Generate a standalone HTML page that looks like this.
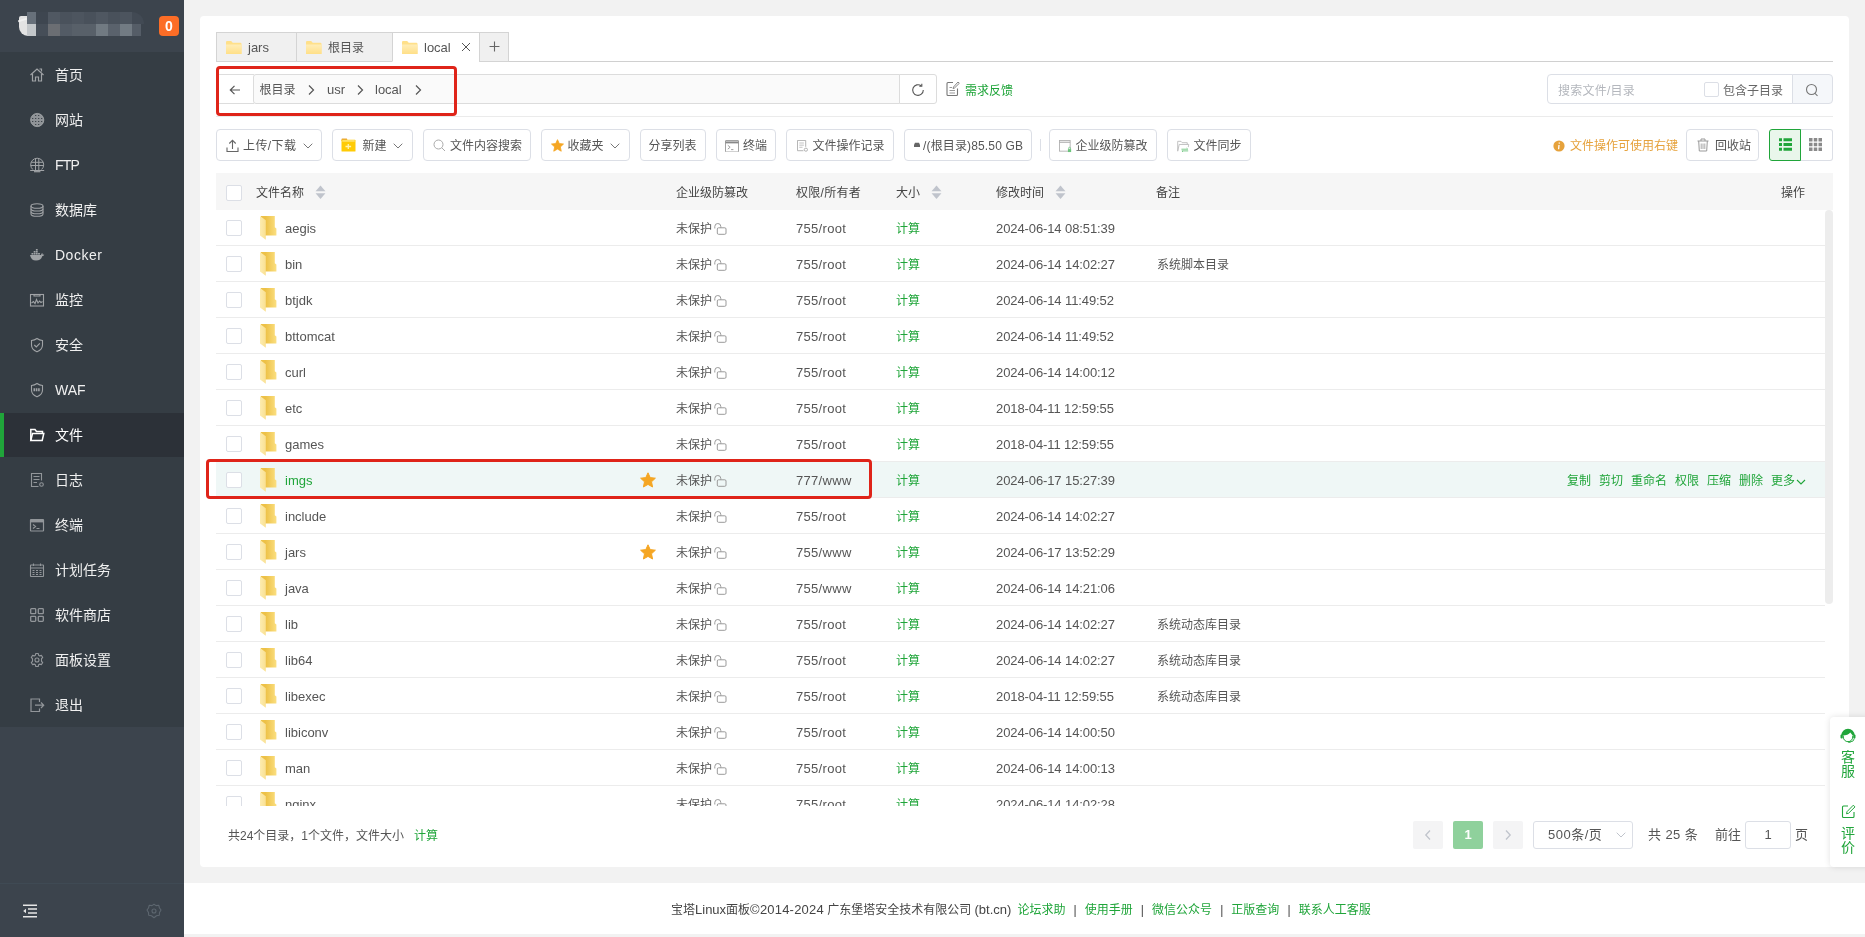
<!DOCTYPE html>
<html lang="zh-CN"><head><meta charset="utf-8"><title>宝塔Linux面板</title>
<style>
*{box-sizing:border-box;margin:0;padding:0}
html,body{width:1865px;height:937px;overflow:hidden;background:#f2f2f2}
body{font-family:"Liberation Sans","Noto Sans CJK SC",sans-serif;font-size:12px;color:#555;position:relative}
a{color:#20a53a;text-decoration:none}
svg{display:block}
/* sidebar */
#side{position:absolute;left:0;top:0;width:184px;height:937px;background:#3c444d}
#side .hd{position:absolute;left:0;top:0;width:184px;height:52px;background:#3c444d}
#side .badge{position:absolute;left:159px;top:16px;width:20px;height:20px;border-radius:4px;background:#fc6d26;color:#fff;font-weight:bold;font-size:14px;line-height:20px;text-align:center}
#side .mz{position:absolute;height:12px}
#menu{position:absolute;left:0;top:52px;width:184px;height:675px;background:#353d44}
#menu .it{position:absolute;left:0;width:184px;height:45px;color:#f0f0f0;font-size:14px;line-height:47px;padding-left:55px}
#menu .it svg{position:absolute;left:29px;top:15px;width:16px;height:16px}
#menu .it.on{background:#2c3138;box-shadow:inset 4px 0 0 #20a53a;color:#fff;height:44px;line-height:45px}
#menu .it.on svg{top:14px}
#side .ft{position:absolute;left:0;top:883px;width:184px;height:54px;border-top:1px solid #3f4a54}
/* main */
#main{position:absolute;left:184px;top:0;width:1681px;height:937px}
#card{position:absolute;left:16px;top:16px;width:1649px;height:851px;background:#fff;border-radius:4px}
#foot{position:absolute;left:0;top:883px;width:1681px;height:51px;background:#fff;text-align:left;padding-left:487px;line-height:53px;color:#444;font-size:12px;white-space:nowrap}
#foot .en{font-size:13px}
#tabline{position:absolute;left:32px;top:61px;width:1617px;height:1px;background:#d0d0d0}
.tab{position:absolute;top:32px;height:30px;background:#f0f0f0;border:1px solid #d4d4d4;color:#555;font-size:12px;line-height:31px}
.tab .en{font-size:13px;line-height:29px}
.tab.act{background:#fff;border-bottom-color:#fff}
.tab span{position:absolute;top:0}
.tab .tf{position:absolute;left:9px;top:7.500px;width:15.500px;height:13.500px}
.tab .tx{position:absolute;left:68px;top:9px;width:10px;height:10px}
.tab .tp{position:absolute;left:9px;top:8px;width:11px;height:11px}
#pback{position:absolute;left:32px;top:74px;width:38px;height:30px;background:#fff;border:1px solid #ddd;border-right:0}
#pback svg{position:absolute;left:12px;top:9px;width:12px;height:12px}
#pbar{position:absolute;left:69px;top:74px;width:647px;height:30px;background:#fafafa;border:1px solid #dcdcdc;border-radius:3px 0 0 3px;font-size:12px;line-height:31px;color:#555}
#pbar .en{font-size:13px;line-height:29px}
#pbar .seg{position:absolute;top:0}
#pbar .ch{position:absolute;top:9px;width:8px;height:12px}
#prefresh{position:absolute;left:715px;top:74px;width:38px;height:30px;background:#fff;border:1px solid #dcdcdc;border-radius:0 3px 3px 0}
#prefresh svg{position:absolute;left:11px;top:8px;width:14px;height:14px}
#fb{position:absolute;left:762px;top:74px;height:30px;line-height:34px;font-size:12px}
#fb svg{position:absolute;left:0;top:7px;width:14px;height:16px}
#fb a{position:absolute;left:19px;top:0;white-space:nowrap}
#redbox1{position:absolute;left:32px;top:66px;width:241px;height:50px;border:3px solid #df2419;border-radius:4px}
#navline{position:absolute;left:32px;top:116px;width:1617px;height:1px;background:#ebebeb}
#sbox{position:absolute;left:1363px;top:74px;width:246px;height:30px;background:#fff;border:1px solid #dcdfe6;border-radius:4px 0 0 4px;line-height:32px}
#sbox .ph{position:absolute;left:10px;top:0;color:#b4b7bd;letter-spacing:.25px}
#sbox .cb2{position:absolute;left:156px;top:7px;width:15px;height:15px;border:1px solid #dcdfe6;border-radius:2px;background:#fff}
#sbox .inc{position:absolute;left:175px;top:0;color:#666}
#sbtn{position:absolute;left:1608px;top:74px;width:41px;height:30px;background:#f5f7fa;border:1px solid #dcdfe6;border-radius:0 4px 4px 0}
#sbtn svg{position:absolute;left:12px;top:8px;width:14px;height:14px}
.btn{position:absolute;top:129px;height:32px;background:#fff;border:1px solid #dcdfe6;border-radius:4px;line-height:33px;color:#555;font-size:12px;white-space:nowrap}
.btn span{position:absolute;top:0}
.btn svg{position:absolute}
.btn .dn{top:13px;width:10px;height:6px}
#tsep{position:absolute;left:856px;top:139px;width:1px;height:12px;background:#dcdfe6}
#tip{position:absolute;left:1369px;top:129px;height:31px;line-height:35px;color:#e6a23c;white-space:nowrap}
#tip svg{position:absolute;left:0;top:11px;width:12px;height:12px}
#tip span{position:absolute;left:17px;top:0}
#vlist{position:absolute;left:1585px;top:129px;width:32px;height:32px;background:#e9f6eb;border:1px solid #20a53a;border-radius:3px 0 0 3px;z-index:2}
#vgrid{position:absolute;left:1616px;top:129px;width:33px;height:32px;background:#fff;border:1px solid #dcdfe6;border-left:0;border-radius:0 3px 3px 0}
#vlist svg,#vgrid svg{position:absolute;left:9px;top:8px;width:13px;height:13px}
#thead{position:absolute;left:32px;top:173px;width:1617px;height:37px;background:#f6f6f6;line-height:37px;color:#444}
#thead span{position:absolute;top:2px;white-space:nowrap}
#thead .so{position:absolute;top:11.500px;width:11px;height:14.500px;margin-left:-0.500px}
.cb{position:absolute;width:16px;height:16px;border:1px solid #dcdfe6;border-radius:2px;background:#fff}
#scroll{position:absolute;left:1641px;top:210px;width:8px;height:394px;background:#ededed;border-radius:4px}
/* rows */
#tbody{position:absolute;left:32px;top:210px;width:1609px;height:596px;overflow:hidden}
.row{position:absolute;left:0;width:1609px;height:36px;border-bottom:1px solid #ececec;line-height:35px;color:#555}
.row.hov{background:#eff7f6}
.row .cb{left:10px;top:10px}
.row .fd{position:absolute;left:44px;top:6px;width:17px;height:24px}
.row span{position:absolute;top:2px;white-space:nowrap}
.row .nm{left:69px;font-size:13px;top:1px}
.row.hov .nm{color:#20a53a}
.row .st{position:absolute;left:424px;top:10px;width:16px;height:16px}
.row .pr{left:460px}
.row .lk{position:absolute;left:497.5px;top:12.5px;width:13px;height:12px}
.row .pm{left:580px;font-size:13px;top:1px;letter-spacing:.3px}
.row .sz{left:680px;color:#20a53a}
.row .dt{left:780px;font-size:13px;top:1px;letter-spacing:-.1px}
.row .ps{left:941px}
.row .ops{position:absolute;right:19px;top:2px;display:flex;gap:8px}
.row .ops a{display:flex;align-items:center}
.row .ops .mv{width:10px;height:10px;margin-left:1px}
#redbox2{position:absolute;left:22px;top:459px;width:666px;height:40px;border:3px solid #df2419;border-radius:4px}
#sum{position:absolute;left:44px;top:821px;line-height:30px;font-size:12px;color:#555;white-space:nowrap}
#sum a{margin-left:10px}
.pg{position:absolute;top:821px;width:30px;height:28px;background:#f4f4f5;border-radius:2px;text-align:center;line-height:28px;font-size:13px}
.pg svg{position:absolute;left:11px;top:8px;width:8px;height:12px}
.pg.cur{background:#8fd19c;color:#fff;font-weight:bold}
#psel{position:absolute;left:1349px;top:821px;width:100px;height:28px;border:1px solid #dcdfe6;border-radius:3px;background:#fff;font-size:13px;line-height:26px;color:#555}
#psel span{position:absolute;left:14px;top:0}
#psel svg{position:absolute;left:82px;top:10px;width:10px;height:6px}
#ptot,#pgo,#pye{position:absolute;top:821px;line-height:28px;font-size:13px;color:#555;white-space:nowrap}
#ptot{left:1464px}
#pgo{left:1531px}
#pye{left:1611px}
#pinp{position:absolute;left:1561px;top:821px;width:46px;height:28px;border:1px solid #dcdfe6;border-radius:3px;background:#fff;text-align:center;line-height:26px;font-size:13px;color:#555}
#float{position:absolute;left:1646px;top:717px;width:40px;height:150px;background:#fff;border-radius:4px 0 0 4px;box-shadow:0 0 6px rgba(0,0,0,.12);color:#20a53a;font-size:14px}
#float svg{position:absolute}
#float span{position:absolute;left:11px;line-height:16px}
#foot b{font-weight:normal;margin:0 8.100px;color:#444}

#side,#main{will-change:transform}

</style></head><body>
<svg width="0" height="0" style="position:absolute">
<defs>
<linearGradient id="fg" x1="0" y1="0" x2="1" y2="0"><stop offset="0.3" stop-color="#edc147"/><stop offset="1" stop-color="#fbdf80"/></linearGradient><linearGradient id="fg2" x1="0" y1="0" x2="1" y2="0"><stop offset="0" stop-color="#fdecb0"/><stop offset="1" stop-color="#f9e092"/></linearGradient>
<linearGradient id="tg" x1="0" y1="0" x2="0" y2="1"><stop offset="0" stop-color="#ffedb8"/><stop offset="1" stop-color="#ffdf85"/></linearGradient>
</defs>
</svg>
<div id="side">
<div class="hd">
<div class="mz" style="left:19px;top:16px;width:9px;height:20px;background:#e3e3e3;border-radius:2px 0 0 9px"></div>
<div class="mz" style="left:18px;top:19px;width:9px;height:2px;background:#f0f0f0;transform:rotate(-18deg)"></div>
<div class="mz" style="left:27px;top:12px;width:9px;background:#67707a"></div>
<div class="mz" style="left:36px;top:12px;width:12px;background:#3e4650"></div>
<div class="mz" style="left:48px;top:12px;width:12px;background:#505862"></div>
<div class="mz" style="left:60px;top:12px;width:12px;background:#4a525c"></div>
<div class="mz" style="left:72px;top:12px;width:12px;background:#4d555f"></div>
<div class="mz" style="left:84px;top:12px;width:12px;background:#49515b"></div>
<div class="mz" style="left:96px;top:12px;width:12px;background:#4f5761"></div>
<div class="mz" style="left:108px;top:12px;width:12px;background:#49515b"></div>
<div class="mz" style="left:120px;top:12px;width:12px;background:#4c545e"></div>
<div class="mz" style="left:132px;top:12px;width:12px;background:#424a54;border-radius:0 12px 0 0"></div>
<div class="mz" style="left:27px;top:24px;width:9px;background:#c3c7ca"></div>
<div class="mz" style="left:36px;top:24px;width:12px;background:#464e58"></div>
<div class="mz" style="left:48px;top:24px;width:12px;background:#6b6e73"></div>
<div class="mz" style="left:60px;top:24px;width:12px;background:#535b65"></div>
<div class="mz" style="left:72px;top:24px;width:12px;background:#586069"></div>
<div class="mz" style="left:84px;top:24px;width:12px;background:#586069"></div>
<div class="mz" style="left:96px;top:24px;width:12px;background:#717a82"></div>
<div class="mz" style="left:108px;top:24px;width:12px;background:#5a626c"></div>
<div class="mz" style="left:120px;top:24px;width:12px;background:#727b83"></div>
<div class="mz" style="left:132px;top:24px;width:9px;background:#555d67"></div>
<div class="badge">0</div>
</div>
<div id="menu">
<div class="it" style="top:0"><svg viewBox="0 0 16 16" fill="none" stroke="#a0a3a6" stroke-width="1.2"><path d="M1.5 8 L8 2 L14.5 8"/><path d="M3.5 7 V14 H6.5 V10 H9.5 V14 H12.5 V7"/><path d="M10.5 2 H12.5 V4.5"/></svg>首页</div>
<div class="it" style="top:45px"><svg viewBox="0 0 16 16"><circle cx="8.200" cy="8" r="6.600" fill="#8f9397" stroke="#a6a9ab" stroke-width="0.800"/><g fill="#333a41"><rect x="3.100" y="5.900" width="1.200" height="1.200" rx="0.300"/><rect x="3.100" y="8.900" width="1.200" height="1.200" rx="0.300"/><rect x="6.100" y="2.900" width="1.200" height="1.200" rx="0.300"/><rect x="6.100" y="5.900" width="1.200" height="1.200" rx="0.300"/><rect x="6.100" y="8.900" width="1.200" height="1.200" rx="0.300"/><rect x="6.100" y="11.900" width="1.200" height="1.200" rx="0.300"/><rect x="9.100" y="2.900" width="1.200" height="1.200" rx="0.300"/><rect x="9.100" y="5.900" width="1.200" height="1.200" rx="0.300"/><rect x="9.100" y="8.900" width="1.200" height="1.200" rx="0.300"/><rect x="9.100" y="11.900" width="1.200" height="1.200" rx="0.300"/><rect x="12.100" y="5.900" width="1.200" height="1.200" rx="0.300"/><rect x="12.100" y="8.900" width="1.200" height="1.200" rx="0.300"/></g></svg>网站</div>
<div class="it" style="top:90px"><svg viewBox="0 0 16 16" fill="none" stroke="#a0a3a6" stroke-width="1"><path d="M3.800 12.500 A6.500 6.500 0 1 1 12.600 12.500"/><path d="M6.500 1.600 V13 M9.800 1.600 V13 M2.200 5.300 H14.200 M1.800 8.500 H14.600 M1.200 13.500 H15.200"/><path d="M5 14.700 H11.400" stroke-width="1.200"/></svg><span style="letter-spacing:-.8px">FTP</span></div>
<div class="it" style="top:135px"><svg viewBox="0 0 16 16" fill="none" stroke="#a0a3a6" stroke-width="1.1"><ellipse cx="8" cy="4" rx="6" ry="2.3"/><path d="M2 4 V12 Q2 14.300 8 14.300 Q14 14.300 14 12 V4"/><path d="M2 6.700 Q2 9 8 9 Q14 9 14 6.700 M2 9.400 Q2 11.700 8 11.700 Q14 11.700 14 9.400"/></svg>数据库</div>
<div class="it" style="top:180px"><svg viewBox="0 0 16 16" fill="#a0a3a6"><path d="M1 8 H12 Q12.300 6.500 13.200 6 Q13.800 6.800 13.600 7.500 Q14.600 7.300 15.300 7.800 Q14.600 9.200 13.200 9.200 Q12 13.500 7 13.500 Q2 13.500 1 8Z"/><rect x="2.500" y="6" width="1.800" height="1.600"/><rect x="4.700" y="6" width="1.800" height="1.600"/><rect x="6.900" y="6" width="1.800" height="1.600"/><rect x="9.100" y="6" width="1.800" height="1.600"/><rect x="4.700" y="4" width="1.800" height="1.600"/><rect x="6.900" y="4" width="1.800" height="1.600"/><rect x="6.900" y="2" width="1.800" height="1.600"/></svg><span style="letter-spacing:.5px">Docker</span></div>
<div class="it" style="top:225px"><svg viewBox="0 0 16 16" fill="none" stroke="#a0a3a6" stroke-width="1.1"><rect x="1.500" y="2.500" width="13" height="11.500"/><path d="M5 2.500 V4 H11 V2.500"/><path d="M2.500 11 L4.500 9.500 L6 11.500 L7.500 7.500 L9 11 L10.500 9 L12 10.500 L13.500 9.500"/></svg>监控</div>
<div class="it" style="top:270px"><svg viewBox="0 0 16 16" fill="none" stroke="#a0a3a6" stroke-width="1.1"><path d="M8 1.500 Q10.500 3.300 13.500 3.500 V8 Q13.500 12.500 8 14.800 Q2.500 12.500 2.500 8 V3.500 Q5.500 3.300 8 1.500Z"/><path d="M5.300 8 L7.300 10 L10.800 6.300"/></svg>安全</div>
<div class="it" style="top:315px"><svg viewBox="0 0 16 16" fill="none" stroke="#a0a3a6" stroke-width="1.1"><path d="M8 1.500 Q10.500 3.300 13.500 3.500 V8 Q13.500 12.500 8 14.800 Q2.500 12.500 2.500 8 V3.500 Q5.500 3.300 8 1.500Z"/><path d="M4.500 7 H11.500 M4.500 8.500 H11.500" stroke-width="1.300" stroke-dasharray="1.6 0.700"/></svg>WAF</div>
<div class="it on" style="top:361px"><svg viewBox="0 0 16 16" fill="none" stroke="#fff" stroke-width="1.500"><path d="M1.800 13.500 V2.500 H6 L7.500 4.500 H13.500 V6.500"/><path d="M1.800 13.500 L3.500 6.500 H14.800 L13.200 13.500Z"/></svg>文件</div>
<div class="it" style="top:405px"><svg viewBox="0 0 16 16" fill="none" stroke="#92969a" stroke-width="1.100"><path d="M12.500 8.500 V1.500 H2.500 V14.500 H9.500"/><path d="M4.500 4.500 H10.500 M4.500 7.500 H10.500 M4.500 10.500 H8"/><circle cx="12.500" cy="12.500" r="1.800"/></svg>日志</div>
<div class="it" style="top:450px"><svg viewBox="0 0 16 16" fill="none" stroke="#92969a" stroke-width="1.200"><rect x="1.500" y="2.500" width="13" height="11.500" rx="0.500"/><path d="M1.500 4.200 H14.500" stroke-width="2.400"/><path d="M4 7.500 L6.500 9.500 L4 11.500 M7.500 11.500 H10.500"/></svg>终端</div>
<div class="it" style="top:495px"><svg viewBox="0 0 16 16" fill="none" stroke="#92969a" stroke-width="1.100"><rect x="1.500" y="3" width="13" height="11.500" rx="0.500"/><path d="M4.500 1.500 V4 M11.500 1.500 V4 M1.500 6 H14.500"/><path d="M3.500 8.500 H5.500 M7 8.500 H9 M10.500 8.500 H12.500 M3.500 10.500 H5.500 M7 10.500 H9 M10.500 10.500 H12.500 M3.500 12.500 H5.500 M7 12.500 H9 M10.500 12.500 H12.500"/></svg>计划任务</div>
<div class="it" style="top:540px"><svg viewBox="0 0 16 16" fill="none" stroke="#92969a" stroke-width="1.300"><rect x="1.700" y="1.700" width="5" height="5" rx="0.800"/><rect x="9.300" y="1.700" width="5" height="5" rx="0.800"/><rect x="1.700" y="9.300" width="5" height="5" rx="0.800"/><rect x="9.300" y="9.300" width="5" height="5" rx="0.800"/></svg>软件商店</div>
<div class="it" style="top:585px"><svg viewBox="0 0 16 16" fill="none" stroke="#92969a" stroke-width="1.100"><circle cx="8" cy="8" r="2"/><path d="M6.800 1.500 H9.200 L9.600 3.200 L10.800 3.900 L12.500 3.400 L13.700 5.500 L12.500 6.700 V9.300 L13.700 10.500 L12.500 12.600 L10.800 12.100 L9.600 12.800 L9.200 14.500 H6.800 L6.400 12.800 L5.200 12.100 L3.500 12.600 L2.300 10.500 L3.500 9.300 V6.700 L2.300 5.500 L3.500 3.400 L5.200 3.900 L6.400 3.200Z" stroke-linejoin="round"/></svg>面板设置</div>
<div class="it" style="top:630px"><svg viewBox="0 0 16 16" fill="none" stroke="#92969a" stroke-width="1.200"><path d="M10.500 5 V2 H2 V14.500 H10.500 V11.500"/><path d="M6 8.200 H14.500 M12 5.500 L14.700 8.200 L12 11"/></svg>退出</div>
</div>
<div class="ft">
<svg style="position:absolute;left:22px;top:20px;width:16px;height:14px" viewBox="0 0 16 14" fill="none" stroke="#e6e6e6" stroke-width="1.500"><path d="M1 1.200 H15 M6 5 H15 M6 9 H15 M1 12.800 H15"/><path d="M4 4.800 V9.200 L1.200 7Z" fill="#e6e6e6" stroke="none"/></svg>
<svg style="position:absolute;left:146px;top:19px;width:16px;height:16px" viewBox="0 0 16 16" fill="none" stroke="#5d666f" stroke-width="1.100"><circle cx="8" cy="8" r="2"/><path d="M8 1.200 L10 2.600 L12.800 2.300 L13.500 5 L15 7 L13.500 9.500 L13.300 12.300 L10.500 12.800 L8 14.800 L5.500 12.800 L2.700 12.300 L2.500 9.500 L1 7 L2.500 5 L3.200 2.300 L6 2.600Z" stroke-linejoin="round"/></svg>
</div>
</div>

<div id="main">
<div id="card"></div>
<!-- tabs -->
<div id="tabline"></div>
<div class="tab" style="left:32px;width:81px"><svg class="tf" viewBox="1 1.5 15 11.500" preserveAspectRatio="none"><path d="M1 2.5 Q1 1.5 2 1.5 L6 1.5 L7.5 3 L15 3 Q16 3 16 4 L16 12 Q16 13 15 13 L2 13 Q1 13 1 12Z" fill="#ffe08a"/><path d="M1 4.5 L16 4.5 L16 12 Q16 13 15 13 L2 13 Q1 13 1 12Z" fill="url(#tg)"/></svg><span class="en" style="left:31px">jars</span></div>
<div class="tab" style="left:112px;width:97px"><svg class="tf" viewBox="1 1.5 15 11.500" preserveAspectRatio="none"><path d="M1 2.5 Q1 1.5 2 1.5 L6 1.5 L7.5 3 L15 3 Q16 3 16 4 L16 12 Q16 13 15 13 L2 13 Q1 13 1 12Z" fill="#ffe08a"/><path d="M1 4.5 L16 4.5 L16 12 Q16 13 15 13 L2 13 Q1 13 1 12Z" fill="url(#tg)"/></svg><span style="left:31px">根目录</span></div>
<div class="tab act" style="left:208px;width:88px"><svg class="tf" viewBox="1 1.5 15 11.500" preserveAspectRatio="none"><path d="M1 2.5 Q1 1.5 2 1.5 L6 1.5 L7.5 3 L15 3 Q16 3 16 4 L16 12 Q16 13 15 13 L2 13 Q1 13 1 12Z" fill="#ffe08a"/><path d="M1 4.5 L16 4.5 L16 12 Q16 13 15 13 L2 13 Q1 13 1 12Z" fill="url(#tg)"/></svg><span class="en" style="left:31px">local</span><svg class="tx" viewBox="0 0 10 10"><path d="M1 1 L9 9 M9 1 L1 9" stroke="#555" stroke-width="1" fill="none"/></svg></div>
<div class="tab" style="left:295px;width:30px"><svg class="tp" viewBox="0 0 10 10"><path d="M5 0.500 V9.500 M0.500 5 H9.500" stroke="#666" stroke-width="1" fill="none"/></svg></div>
<!-- path bar -->
<div id="pback"><svg viewBox="0 0 12 12"><path d="M11 6 H1.500 M5.500 1.800 L1.300 6 L5.500 10.200" stroke="#555" stroke-width="1.200" fill="none"/></svg></div>
<div id="pbar">
<span class="seg" style="left:5.500px">根目录</span><svg class="ch" style="left:53px" viewBox="0 0 8 12"><path d="M2 1.500 L6.500 6 L2 10.500" stroke="#555" stroke-width="1.200" fill="none"/></svg>
<span class="seg en" style="left:73px">usr</span><svg class="ch" style="left:102px" viewBox="0 0 8 12"><path d="M2 1.500 L6.500 6 L2 10.500" stroke="#555" stroke-width="1.200" fill="none"/></svg>
<span class="seg en" style="left:121px">local</span><svg class="ch" style="left:160px" viewBox="0 0 8 12"><path d="M2 1.500 L6.500 6 L2 10.500" stroke="#555" stroke-width="1.200" fill="none"/></svg>
</div>
<div id="prefresh"><svg viewBox="0 0 14 14"><path d="M12.300 7 A5.300 5.300 0 1 1 10.200 2.800" stroke="#555" stroke-width="1.100" fill="none"/><path d="M10.800 0.800 V3.300 H8.300" stroke="#555" stroke-width="1.100" fill="none"/></svg></div>
<div id="fb"><svg viewBox="0 0 14 16"><path d="M11.500 7.500 V13.500 Q11.500 14.500 10.500 14.500 H2 Q1 14.500 1 13.500 V2.500 Q1 1.500 2 1.500 H7" stroke="#777" stroke-width="1.100" fill="none"/><path d="M3.500 6.500 H6 M3.500 9.500 H9 M3.500 12 H9" stroke="#999" stroke-width="1" fill="none"/><path d="M12 1 L13.300 2.300 L8.500 7 L7 7.500 L7.500 6Z" stroke="#777" stroke-width="0.900" fill="none"/></svg><a>需求反馈</a></div>
<div id="redbox1"></div>
<div id="navline"></div>
<!-- search -->
<div id="sbox"><span class="ph">搜索文件/目录</span><i class="cb2"></i><span class="inc">包含子目录</span></div>
<div id="sbtn"><svg viewBox="0 0 14 14"><circle cx="6.500" cy="6.500" r="5" stroke="#777" stroke-width="1.100" fill="none"/><path d="M10 10.300 L12.500 12.800" stroke="#777" stroke-width="1.100"/></svg></div>
<!-- toolbar -->
<div class="btn" style="left:32px;width:106px"><svg style="left:9px;top:9px;width:13px;height:14px" viewBox="0 0 13 14"><path d="M1 8.500 V12.500 H12 V8.500" stroke="#666" stroke-width="1.100" fill="none"/><path d="M6.500 10 V1.500 M3.300 4.500 L6.500 1.300 L9.700 4.500" stroke="#666" stroke-width="1.100" fill="none"/></svg><span style="left:26px;letter-spacing:.4px">上传/下载</span><svg class="dn" style="left:85.500px" viewBox="0 0 10 6"><path d="M0.700 0.700 L5 5 L9.300 0.700" stroke="#777" stroke-width="1" fill="none"/></svg></div>
<div class="btn" style="left:148px;width:81px"><svg style="left:7.500px;top:8px;width:15px;height:14px" viewBox="0 0 15 14"><path d="M0.500 1.300 Q0.500 0.600 1.200 0.600 L5.800 0.600 L6.500 1.800 L0.500 3Z" fill="#e9a63a"/><rect x="0.500" y="1.800" width="14" height="11.700" rx="0.600" fill="#ffcb05"/><rect x="1.300" y="2.300" width="12.400" height="1.300" fill="#ffe88a"/><path d="M7.300 6 V11 M4.500 8.500 H10.100" stroke="#fff3b0" stroke-width="1.300"/></svg><span style="left:29.500px">新建</span><svg class="dn" style="left:60px" viewBox="0 0 10 6"><path d="M0.700 0.700 L5 5 L9.300 0.700" stroke="#777" stroke-width="1" fill="none"/></svg></div>
<div class="btn" style="left:239px;width:108px"><svg style="left:9px;top:9px;width:13px;height:13px" viewBox="0 0 13 13"><circle cx="5.500" cy="5.500" r="4.500" stroke="#aaa" stroke-width="1" fill="none"/><path d="M8.800 8.800 L12 12" stroke="#aaa" stroke-width="1"/></svg><span style="left:26px">文件内容搜索</span></div>
<div class="btn" style="left:357px;width:89px"><svg style="left:9px;top:9px;width:13px;height:13px" viewBox="0 0 16 16"><path d="M8 0.8 L10.2 5.6 L15.4 6.2 L11.5 9.8 L12.6 15 L8 12.4 L3.4 15 L4.5 9.8 L0.6 6.2 L5.8 5.6Z" fill="#f5a623" stroke="#f5a623" stroke-width="1" stroke-linejoin="round"/></svg><span style="left:25.500px">收藏夹</span><svg class="dn" style="left:67.500px" viewBox="0 0 10 6"><path d="M0.700 0.700 L5 5 L9.300 0.700" stroke="#777" stroke-width="1" fill="none"/></svg></div>
<div class="btn" style="left:456px;width:66px"><span style="left:7.500px">分享列表</span></div>
<div class="btn" style="left:532px;width:60px"><svg style="left:8px;top:9.500px;width:14px;height:12.500px" viewBox="0 0 15 13" preserveAspectRatio="none"><rect x="0.500" y="0.500" width="14" height="12" rx="0.500" stroke="#999" stroke-width="1" fill="none"/><path d="M0.500 2.500 H14.500" stroke="#888" stroke-width="2"/><path d="M3 5.500 L5.500 7.500 L3 9.500 M6.500 10 H9" stroke="#999" stroke-width="1" fill="none"/></svg><span style="left:26px">终端</span></div>
<div class="btn" style="left:602px;width:108px"><svg style="left:10px;top:10px;width:11px;height:12px" viewBox="0 0 12 14" preserveAspectRatio="none"><path d="M9.500 8 V0.500 H0.500 V12.500 H7" stroke="#aaa" stroke-width="1" fill="none"/><path d="M2.500 3.500 H7.500 M2.500 6 H7.500 M2.500 8.500 H6" stroke="#bbb" stroke-width="1"/><circle cx="9.700" cy="11.300" r="1.800" stroke="#aaa" stroke-width="1" fill="none"/></svg><span style="left:25.500px">文件操作记录</span></div>
<div class="btn" style="left:720px;width:128px"><svg style="left:8px;top:12px;width:8px;height:6px" viewBox="0 0 8 6"><path d="M1 3 L2 0.800 H6 L7 3 V5 H1Z" fill="#666"/></svg><span style="left:18px;letter-spacing:.15px">/(根目录)85.50 GB</span></div>
<div id="tsep"></div>
<div class="btn" style="left:865px;width:108px"><svg style="left:9px;top:10px;width:12.500px;height:12.500px" viewBox="0 0 14 14"><rect x="0.500" y="0.500" width="12" height="12" stroke="#b0b0b0" stroke-width="1" fill="none"/><path d="M0.500 2.500 H12.500" stroke="#aaa" stroke-width="1.200"/><rect x="10" y="10.200" width="3.600" height="3.300" fill="#6cc47c"/><path d="M10.700 10.200 V9.200 A1.100 1.100 0 0 1 12.900 9.200 V10.200" stroke="#6cc47c" stroke-width="0.800" fill="none"/></svg><span style="left:25.500px">企业级防篡改</span></div>
<div class="btn" style="left:983px;width:84px"><svg style="left:9px;top:10px;width:12.500px;height:12.500px" viewBox="0 0 14 14"><path d="M0.800 12.500 V1.500 H4.500 L5.800 3 H11.500 V5" stroke="#bbb" stroke-width="1" fill="none"/><path d="M0.800 12.500 L2.500 5 H13.200 L12.600 8" stroke="#bbb" stroke-width="1" fill="none"/><path d="M5 10.300 H12 L10.800 9.200 M12.500 12.200 H5.500 L6.700 13.300" stroke="#6cc47c" stroke-width="1" fill="none"/></svg><span style="left:25.500px">文件同步</span></div>
<div id="tip"><svg viewBox="0 0 12 12"><circle cx="6" cy="6" r="5.600" fill="#e6a23c"/><path d="M6.300 2.500 L6.200 3.600 M6 5 L5.600 9.300" stroke="#fff" stroke-width="1.300"/></svg><span>文件操作可使用右键</span></div>
<div class="btn" style="left:1502px;width:73px"><svg style="left:10px;top:8px;width:12px;height:14px" viewBox="0 0 12 14"><path d="M0.500 3 H11.500 M4 3 V1 H8 V3 M1.700 3 L2.300 13 H9.700 L10.300 3" stroke="#999" stroke-width="1" fill="none"/><path d="M4.200 5.500 V11 M6 5.500 V11 M7.800 5.500 V11" stroke="#aaa" stroke-width="1"/></svg><span style="left:28px">回收站</span></div>
<div id="vlist"><svg viewBox="0 0 13 13"><path d="M0 1.800 H3 M4.500 1.800 H13 M0 6.500 H3 M4.500 6.500 H13 M0 11.200 H3 M4.500 11.200 H13" stroke="#20a53a" stroke-width="3"/></svg></div>
<div id="vgrid"><svg viewBox="0 0 13 13"><path d="M0 1.800 H13 M0 6.500 H13 M0 11.200 H13" stroke="#8a8a8a" stroke-width="3.400" stroke-dasharray="3.500 1.250"/></svg></div>
<!-- table header -->
<div id="thead">
<i class="cb" style="left:10px;top:12px"></i>
<span style="left:40px">文件名称</span><svg class="so" style="left:99px" viewBox="0 0 10 14" preserveAspectRatio="none"><path d="M5 0.5 L9.5 6 L0.5 6Z" fill="#c0c4cc"/><path d="M5 13.5 L9.5 8 L0.5 8Z" fill="#c0c4cc"/></svg>
<span style="left:460px">企业级防篡改</span>
<span style="left:580px;letter-spacing:.3px">权限/所有者</span>
<span style="left:680px">大小</span><svg class="so" style="left:715px" viewBox="0 0 10 14" preserveAspectRatio="none"><path d="M5 0.5 L9.5 6 L0.5 6Z" fill="#c0c4cc"/><path d="M5 13.5 L9.5 8 L0.5 8Z" fill="#c0c4cc"/></svg>
<span style="left:780px">修改时间</span><svg class="so" style="left:839px" viewBox="0 0 10 14" preserveAspectRatio="none"><path d="M5 0.5 L9.5 6 L0.5 6Z" fill="#c0c4cc"/><path d="M5 13.5 L9.5 8 L0.5 8Z" fill="#c0c4cc"/></svg>
<span style="left:940px">备注</span>
<span style="left:1565px">操作</span>
</div>
<div id="scroll"></div>

<div id="tbody">
<div class="row" style="top:0px"><i class="cb"></i><svg class="fd" viewBox="0 0 17 24"><path d="M1 0 H14.800 V11.200 L16.400 12.500 V19.600 H1Z" fill="url(#fg)"/><path d="M0 0 L5.800 4.200 V23.800 L0 19.600Z" fill="url(#fg2)"/></svg><span class="nm">aegis</span><span class="pr">未保护</span><svg class="lk" viewBox="0 0 13 12"><g fill="none" stroke="#9a9a9a" stroke-width="1"><rect x="3.300" y="4.800" width="8.700" height="6.500" rx="1.200"/><path d="M6.800 4.800 V3.500 A3 3 0 0 0 0.800 3.500 V5.500"/></g></svg><span class="pm">755/root</span><span class="sz">计算</span><span class="dt">2024-06-14 08:51:39</span><span class="ps"></span></div>
<div class="row" style="top:36px"><i class="cb"></i><svg class="fd" viewBox="0 0 17 24"><path d="M1 0 H14.800 V11.200 L16.400 12.500 V19.600 H1Z" fill="url(#fg)"/><path d="M0 0 L5.800 4.200 V23.800 L0 19.600Z" fill="url(#fg2)"/></svg><span class="nm">bin</span><span class="pr">未保护</span><svg class="lk" viewBox="0 0 13 12"><g fill="none" stroke="#9a9a9a" stroke-width="1"><rect x="3.300" y="4.800" width="8.700" height="6.500" rx="1.200"/><path d="M6.800 4.800 V3.500 A3 3 0 0 0 0.800 3.500 V5.500"/></g></svg><span class="pm">755/root</span><span class="sz">计算</span><span class="dt">2024-06-14 14:02:27</span><span class="ps">系统脚本目录</span></div>
<div class="row" style="top:72px"><i class="cb"></i><svg class="fd" viewBox="0 0 17 24"><path d="M1 0 H14.800 V11.200 L16.400 12.500 V19.600 H1Z" fill="url(#fg)"/><path d="M0 0 L5.800 4.200 V23.800 L0 19.600Z" fill="url(#fg2)"/></svg><span class="nm">btjdk</span><span class="pr">未保护</span><svg class="lk" viewBox="0 0 13 12"><g fill="none" stroke="#9a9a9a" stroke-width="1"><rect x="3.300" y="4.800" width="8.700" height="6.500" rx="1.200"/><path d="M6.800 4.800 V3.500 A3 3 0 0 0 0.800 3.500 V5.500"/></g></svg><span class="pm">755/root</span><span class="sz">计算</span><span class="dt">2024-06-14 11:49:52</span><span class="ps"></span></div>
<div class="row" style="top:108px"><i class="cb"></i><svg class="fd" viewBox="0 0 17 24"><path d="M1 0 H14.800 V11.200 L16.400 12.500 V19.600 H1Z" fill="url(#fg)"/><path d="M0 0 L5.800 4.200 V23.800 L0 19.600Z" fill="url(#fg2)"/></svg><span class="nm">bttomcat</span><span class="pr">未保护</span><svg class="lk" viewBox="0 0 13 12"><g fill="none" stroke="#9a9a9a" stroke-width="1"><rect x="3.300" y="4.800" width="8.700" height="6.500" rx="1.200"/><path d="M6.800 4.800 V3.500 A3 3 0 0 0 0.800 3.500 V5.500"/></g></svg><span class="pm">755/root</span><span class="sz">计算</span><span class="dt">2024-06-14 11:49:52</span><span class="ps"></span></div>
<div class="row" style="top:144px"><i class="cb"></i><svg class="fd" viewBox="0 0 17 24"><path d="M1 0 H14.800 V11.200 L16.400 12.500 V19.600 H1Z" fill="url(#fg)"/><path d="M0 0 L5.800 4.200 V23.800 L0 19.600Z" fill="url(#fg2)"/></svg><span class="nm">curl</span><span class="pr">未保护</span><svg class="lk" viewBox="0 0 13 12"><g fill="none" stroke="#9a9a9a" stroke-width="1"><rect x="3.300" y="4.800" width="8.700" height="6.500" rx="1.200"/><path d="M6.800 4.800 V3.500 A3 3 0 0 0 0.800 3.500 V5.500"/></g></svg><span class="pm">755/root</span><span class="sz">计算</span><span class="dt">2024-06-14 14:00:12</span><span class="ps"></span></div>
<div class="row" style="top:180px"><i class="cb"></i><svg class="fd" viewBox="0 0 17 24"><path d="M1 0 H14.800 V11.200 L16.400 12.500 V19.600 H1Z" fill="url(#fg)"/><path d="M0 0 L5.800 4.200 V23.800 L0 19.600Z" fill="url(#fg2)"/></svg><span class="nm">etc</span><span class="pr">未保护</span><svg class="lk" viewBox="0 0 13 12"><g fill="none" stroke="#9a9a9a" stroke-width="1"><rect x="3.300" y="4.800" width="8.700" height="6.500" rx="1.200"/><path d="M6.800 4.800 V3.500 A3 3 0 0 0 0.800 3.500 V5.500"/></g></svg><span class="pm">755/root</span><span class="sz">计算</span><span class="dt">2018-04-11 12:59:55</span><span class="ps"></span></div>
<div class="row" style="top:216px"><i class="cb"></i><svg class="fd" viewBox="0 0 17 24"><path d="M1 0 H14.800 V11.200 L16.400 12.500 V19.600 H1Z" fill="url(#fg)"/><path d="M0 0 L5.800 4.200 V23.800 L0 19.600Z" fill="url(#fg2)"/></svg><span class="nm">games</span><span class="pr">未保护</span><svg class="lk" viewBox="0 0 13 12"><g fill="none" stroke="#9a9a9a" stroke-width="1"><rect x="3.300" y="4.800" width="8.700" height="6.500" rx="1.200"/><path d="M6.800 4.800 V3.500 A3 3 0 0 0 0.800 3.500 V5.500"/></g></svg><span class="pm">755/root</span><span class="sz">计算</span><span class="dt">2018-04-11 12:59:55</span><span class="ps"></span></div>
<div class="row hov" style="top:252px"><i class="cb"></i><svg class="fd" viewBox="0 0 17 24"><path d="M1 0 H14.800 V11.200 L16.400 12.500 V19.600 H1Z" fill="url(#fg)"/><path d="M0 0 L5.800 4.200 V23.800 L0 19.600Z" fill="url(#fg2)"/></svg><span class="nm">imgs</span><svg class="st" viewBox="0 0 16 16"><path d="M8 0.8 L10.2 5.6 L15.4 6.2 L11.5 9.8 L12.6 15 L8 12.4 L3.4 15 L4.5 9.8 L0.6 6.2 L5.8 5.6Z" fill="#f5a623" stroke="#f5a623" stroke-width="1" stroke-linejoin="round"/></svg><span class="pr">未保护</span><svg class="lk" viewBox="0 0 13 12"><g fill="none" stroke="#9a9a9a" stroke-width="1"><rect x="3.300" y="4.800" width="8.700" height="6.500" rx="1.200"/><path d="M6.800 4.800 V3.500 A3 3 0 0 0 0.800 3.500 V5.500"/></g></svg><span class="pm">777/www</span><span class="sz">计算</span><span class="dt">2024-06-17 15:27:39</span><span class="ps"></span><div class="ops"><a>复制</a><a>剪切</a><a>重命名</a><a>权限</a><a>压缩</a><a>删除</a><a>更多<svg viewBox="0 0 10 10" class="mv"><path d="M1 3 L5 7 L9 3" fill="none" stroke="#20a53a" stroke-width="1.1"/></svg></a></div></div>
<div class="row" style="top:288px"><i class="cb"></i><svg class="fd" viewBox="0 0 17 24"><path d="M1 0 H14.800 V11.200 L16.400 12.500 V19.600 H1Z" fill="url(#fg)"/><path d="M0 0 L5.800 4.200 V23.800 L0 19.600Z" fill="url(#fg2)"/></svg><span class="nm">include</span><span class="pr">未保护</span><svg class="lk" viewBox="0 0 13 12"><g fill="none" stroke="#9a9a9a" stroke-width="1"><rect x="3.300" y="4.800" width="8.700" height="6.500" rx="1.200"/><path d="M6.800 4.800 V3.500 A3 3 0 0 0 0.800 3.500 V5.500"/></g></svg><span class="pm">755/root</span><span class="sz">计算</span><span class="dt">2024-06-14 14:02:27</span><span class="ps"></span></div>
<div class="row" style="top:324px"><i class="cb"></i><svg class="fd" viewBox="0 0 17 24"><path d="M1 0 H14.800 V11.200 L16.400 12.500 V19.600 H1Z" fill="url(#fg)"/><path d="M0 0 L5.800 4.200 V23.800 L0 19.600Z" fill="url(#fg2)"/></svg><span class="nm">jars</span><svg class="st" viewBox="0 0 16 16"><path d="M8 0.8 L10.2 5.6 L15.4 6.2 L11.5 9.8 L12.6 15 L8 12.4 L3.4 15 L4.5 9.8 L0.6 6.2 L5.8 5.6Z" fill="#f5a623" stroke="#f5a623" stroke-width="1" stroke-linejoin="round"/></svg><span class="pr">未保护</span><svg class="lk" viewBox="0 0 13 12"><g fill="none" stroke="#9a9a9a" stroke-width="1"><rect x="3.300" y="4.800" width="8.700" height="6.500" rx="1.200"/><path d="M6.800 4.800 V3.500 A3 3 0 0 0 0.800 3.500 V5.500"/></g></svg><span class="pm">755/www</span><span class="sz">计算</span><span class="dt">2024-06-17 13:52:29</span><span class="ps"></span></div>
<div class="row" style="top:360px"><i class="cb"></i><svg class="fd" viewBox="0 0 17 24"><path d="M1 0 H14.800 V11.200 L16.400 12.500 V19.600 H1Z" fill="url(#fg)"/><path d="M0 0 L5.800 4.200 V23.800 L0 19.600Z" fill="url(#fg2)"/></svg><span class="nm">java</span><span class="pr">未保护</span><svg class="lk" viewBox="0 0 13 12"><g fill="none" stroke="#9a9a9a" stroke-width="1"><rect x="3.300" y="4.800" width="8.700" height="6.500" rx="1.200"/><path d="M6.800 4.800 V3.500 A3 3 0 0 0 0.800 3.500 V5.500"/></g></svg><span class="pm">755/www</span><span class="sz">计算</span><span class="dt">2024-06-14 14:21:06</span><span class="ps"></span></div>
<div class="row" style="top:396px"><i class="cb"></i><svg class="fd" viewBox="0 0 17 24"><path d="M1 0 H14.800 V11.200 L16.400 12.500 V19.600 H1Z" fill="url(#fg)"/><path d="M0 0 L5.800 4.200 V23.800 L0 19.600Z" fill="url(#fg2)"/></svg><span class="nm">lib</span><span class="pr">未保护</span><svg class="lk" viewBox="0 0 13 12"><g fill="none" stroke="#9a9a9a" stroke-width="1"><rect x="3.300" y="4.800" width="8.700" height="6.500" rx="1.200"/><path d="M6.800 4.800 V3.500 A3 3 0 0 0 0.800 3.500 V5.500"/></g></svg><span class="pm">755/root</span><span class="sz">计算</span><span class="dt">2024-06-14 14:02:27</span><span class="ps">系统动态库目录</span></div>
<div class="row" style="top:432px"><i class="cb"></i><svg class="fd" viewBox="0 0 17 24"><path d="M1 0 H14.800 V11.200 L16.400 12.500 V19.600 H1Z" fill="url(#fg)"/><path d="M0 0 L5.800 4.200 V23.800 L0 19.600Z" fill="url(#fg2)"/></svg><span class="nm">lib64</span><span class="pr">未保护</span><svg class="lk" viewBox="0 0 13 12"><g fill="none" stroke="#9a9a9a" stroke-width="1"><rect x="3.300" y="4.800" width="8.700" height="6.500" rx="1.200"/><path d="M6.800 4.800 V3.500 A3 3 0 0 0 0.800 3.500 V5.500"/></g></svg><span class="pm">755/root</span><span class="sz">计算</span><span class="dt">2024-06-14 14:02:27</span><span class="ps">系统动态库目录</span></div>
<div class="row" style="top:468px"><i class="cb"></i><svg class="fd" viewBox="0 0 17 24"><path d="M1 0 H14.800 V11.200 L16.400 12.500 V19.600 H1Z" fill="url(#fg)"/><path d="M0 0 L5.800 4.200 V23.800 L0 19.600Z" fill="url(#fg2)"/></svg><span class="nm">libexec</span><span class="pr">未保护</span><svg class="lk" viewBox="0 0 13 12"><g fill="none" stroke="#9a9a9a" stroke-width="1"><rect x="3.300" y="4.800" width="8.700" height="6.500" rx="1.200"/><path d="M6.800 4.800 V3.500 A3 3 0 0 0 0.800 3.500 V5.500"/></g></svg><span class="pm">755/root</span><span class="sz">计算</span><span class="dt">2018-04-11 12:59:55</span><span class="ps">系统动态库目录</span></div>
<div class="row" style="top:504px"><i class="cb"></i><svg class="fd" viewBox="0 0 17 24"><path d="M1 0 H14.800 V11.200 L16.400 12.500 V19.600 H1Z" fill="url(#fg)"/><path d="M0 0 L5.800 4.200 V23.800 L0 19.600Z" fill="url(#fg2)"/></svg><span class="nm">libiconv</span><span class="pr">未保护</span><svg class="lk" viewBox="0 0 13 12"><g fill="none" stroke="#9a9a9a" stroke-width="1"><rect x="3.300" y="4.800" width="8.700" height="6.500" rx="1.200"/><path d="M6.800 4.800 V3.500 A3 3 0 0 0 0.800 3.500 V5.500"/></g></svg><span class="pm">755/root</span><span class="sz">计算</span><span class="dt">2024-06-14 14:00:50</span><span class="ps"></span></div>
<div class="row" style="top:540px"><i class="cb"></i><svg class="fd" viewBox="0 0 17 24"><path d="M1 0 H14.800 V11.200 L16.400 12.500 V19.600 H1Z" fill="url(#fg)"/><path d="M0 0 L5.800 4.200 V23.800 L0 19.600Z" fill="url(#fg2)"/></svg><span class="nm">man</span><span class="pr">未保护</span><svg class="lk" viewBox="0 0 13 12"><g fill="none" stroke="#9a9a9a" stroke-width="1"><rect x="3.300" y="4.800" width="8.700" height="6.500" rx="1.200"/><path d="M6.800 4.800 V3.500 A3 3 0 0 0 0.800 3.500 V5.500"/></g></svg><span class="pm">755/root</span><span class="sz">计算</span><span class="dt">2024-06-14 14:00:13</span><span class="ps"></span></div>
<div class="row" style="top:576px"><i class="cb"></i><svg class="fd" viewBox="0 0 17 24"><path d="M1 0 H14.800 V11.200 L16.400 12.500 V19.600 H1Z" fill="url(#fg)"/><path d="M0 0 L5.800 4.200 V23.800 L0 19.600Z" fill="url(#fg2)"/></svg><span class="nm">nginx</span><span class="pr">未保护</span><svg class="lk" viewBox="0 0 13 12"><g fill="none" stroke="#9a9a9a" stroke-width="1"><rect x="3.300" y="4.800" width="8.700" height="6.500" rx="1.200"/><path d="M6.800 4.800 V3.500 A3 3 0 0 0 0.800 3.500 V5.500"/></g></svg><span class="pm">755/root</span><span class="sz">计算</span><span class="dt">2024-06-14 14:02:28</span><span class="ps"></span></div>
</div>
<div id="redbox2"></div>
<div id="sum">共24个目录，1个文件，文件大小<a>计算</a></div>
<div class="pg" style="left:1229px"><svg viewBox="0 0 8 12"><path d="M6 1.500 L1.800 6 L6 10.500" stroke="#c0c4cc" stroke-width="1.300" fill="none"/></svg></div>
<div class="pg cur" style="left:1269px">1</div>
<div class="pg" style="left:1309px"><svg viewBox="0 0 8 12"><path d="M2 1.500 L6.200 6 L2 10.500" stroke="#c0c4cc" stroke-width="1.300" fill="none"/></svg></div>
<div id="psel"><span style="letter-spacing:.5px">500条/页</span><svg viewBox="0 0 10 6"><path d="M0.700 0.700 L5 5 L9.300 0.700" stroke="#c0c4cc" stroke-width="1" fill="none"/></svg></div>
<div id="ptot" style="letter-spacing:.4px">共 25 条</div>
<div id="pgo">前往</div>
<div id="pinp">1</div>
<div id="pye">页</div>
<div id="float">
<svg style="left:10px;top:10px;width:16px;height:17px" viewBox="0 0 16 17"><path d="M1.300 8.500 A6.700 6.700 0 0 1 14.700 8.500 Q11.500 8.300 10.300 5.500 Q8 8.800 1.300 8.500Z" fill="#20a53a"/><path d="M3.300 8.500 V10 A4.700 4.700 0 0 0 12.700 10 V8.500" fill="none" stroke="#20a53a" stroke-width="1"/><rect x="0.500" y="7.500" width="2.300" height="4" rx="1" fill="#20a53a"/><rect x="13.200" y="7.500" width="2.300" height="4" rx="1" fill="#20a53a"/><path d="M14.300 11.500 Q14 14.800 10 15" stroke="#20a53a" stroke-width="0.900" fill="none"/><rect x="8" y="14.200" width="2.500" height="1.600" rx="0.800" fill="#20a53a"/></svg>
<span style="top:32px">客</span><span style="top:46px">服</span>
<svg style="left:10.500px;top:87px;width:15px;height:15px" viewBox="0 0 15 15"><path d="M13 8 V12.500 Q13 13.500 12 13.500 H2.500 Q1.500 13.500 1.500 12.500 V3 Q1.500 2 2.500 2 H7" stroke="#20a53a" stroke-width="1.100" fill="none"/><path d="M12.300 1.200 L14 2.900 L7.500 9.300 L5.500 9.800 L6 7.700Z" stroke="#20a53a" stroke-width="1" fill="none" stroke-linejoin="round"/></svg>
<span style="top:108px">评</span><span style="top:122px">价</span>
</div>
<div id="foot">宝塔<span class="en">Linux</span>面板<span class="en" style="letter-spacing:.2px">©2014-2024</span> 广东堡塔安全技术有限公司 <span class="en">(bt.cn)</span><a style="margin-left:6px">论坛求助</a><b>|</b><a>使用手册</a><b>|</b><a>微信公众号</a><b>|</b><a>正版查询</a><b>|</b><a>联系人工客服</a></div>

</div>
</body></html>
